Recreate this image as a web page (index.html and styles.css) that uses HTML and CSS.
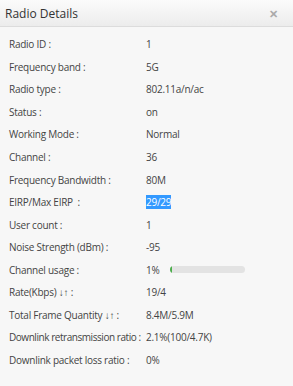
FILE: index.html
```html
<!DOCTYPE html>
<html lang="en">
<head>
    <meta charset="UTF-8">
    <title>Radio Details</title>
    <link rel="stylesheet" href="styles.css">
</head>
<body>
    <div class="dialog">
        <div class="dialog-header">
            <span class="dialog-title">Radio Details</span>
            <span class="dialog-close">&#10005;</span>
        </div>
        <div class="dialog-body">
            <div class="row"><span class="label">Radio ID :</span><span class="value">1</span></div>
            <div class="row"><span class="label">Frequency band :</span><span class="value">5G</span></div>
            <div class="row"><span class="label">Radio type :</span><span class="value">802.11a/n/ac</span></div>
            <div class="row"><span class="label">Status :</span><span class="value">on</span></div>
            <div class="row"><span class="label">Working Mode :</span><span class="value">Normal</span></div>
            <div class="row"><span class="label">Channel :</span><span class="value">36</span></div>
            <div class="row"><span class="label">Frequency Bandwidth :</span><span class="value">80M</span></div>
            <div class="row"><span class="label">EIRP/Max EIRP &nbsp;:</span><span class="value"><span class="selected">29/29</span></span></div>
            <div class="row"><span class="label">User count :</span><span class="value">1</span></div>
            <div class="row"><span class="label">Noise Strength (dBm) :</span><span class="value">-95</span></div>
            <div class="row"><span class="label">Channel usage :</span><span class="value">1%<span class="bar"><span class="bar-fill" style="width:1%"></span></span></span></div>
            <div class="row"><span class="label">Rate(Kbps) &#8595;&#8593; :</span><span class="value">19/4</span></div>
            <div class="row"><span class="label">Total Frame Quantity &#8595;&#8593; :</span><span class="value">8.4M/5.9M</span></div>
            <div class="row"><span class="label tight">Downlink retransmission ratio :</span><span class="value">2.1%(100/4.7K)</span></div>
            <div class="row"><span class="label">Downlink packet loss ratio :</span><span class="value">0%</span></div>
        </div>
    </div>
</body>
</html>
```
FILE: styles.css
```css
body {
    margin: 0;
    background-color: #f7f7f7;
    font-family: "Open Sans", "Noto Sans", sans-serif;
    font-size: 10px;
    letter-spacing: -0.25px;
    color: #444;
}

.dialog {
    width: 293px;
    height: 386px;
    background-color: #f7f7f7;
}

.dialog-header {
    display: flex;
    justify-content: space-between;
    align-items: center;
    height: 26px;
    padding: 0 15px 0 5px;
    background: linear-gradient(#fbfbfb, #ececec);
    border-bottom: 1px solid #dcdcdc;
}

.dialog-title {
    font-size: 12px;
    letter-spacing: 0;
    color: #333;
}

.dialog-close {
    font-size: 11px;
    color: #aaa;
    font-weight: bold;
}

.dialog-body {
    padding: 6px 0 0 9px;
}

.row {
    display: flex;
    align-items: center;
    height: 22.55px;
}

.label {
    min-width: 135px;
    padding-right: 2px;
    white-space: nowrap;
}

.label.tight {
    letter-spacing: -0.45px;
}

.value {
    display: flex;
    align-items: center;
}

.selected {
    background-color: #3399ff;
    color: #fff;
}

.bar {
    display: inline-block;
    width: 75px;
    height: 7px;
    margin-left: 11px;
    border-radius: 4px;
    background-color: #e3e3e3;
    overflow: hidden;
}

.bar-fill {
    display: block;
    min-width: 2px;
    height: 100%;
    background-color: #4cae4c;
}
```
